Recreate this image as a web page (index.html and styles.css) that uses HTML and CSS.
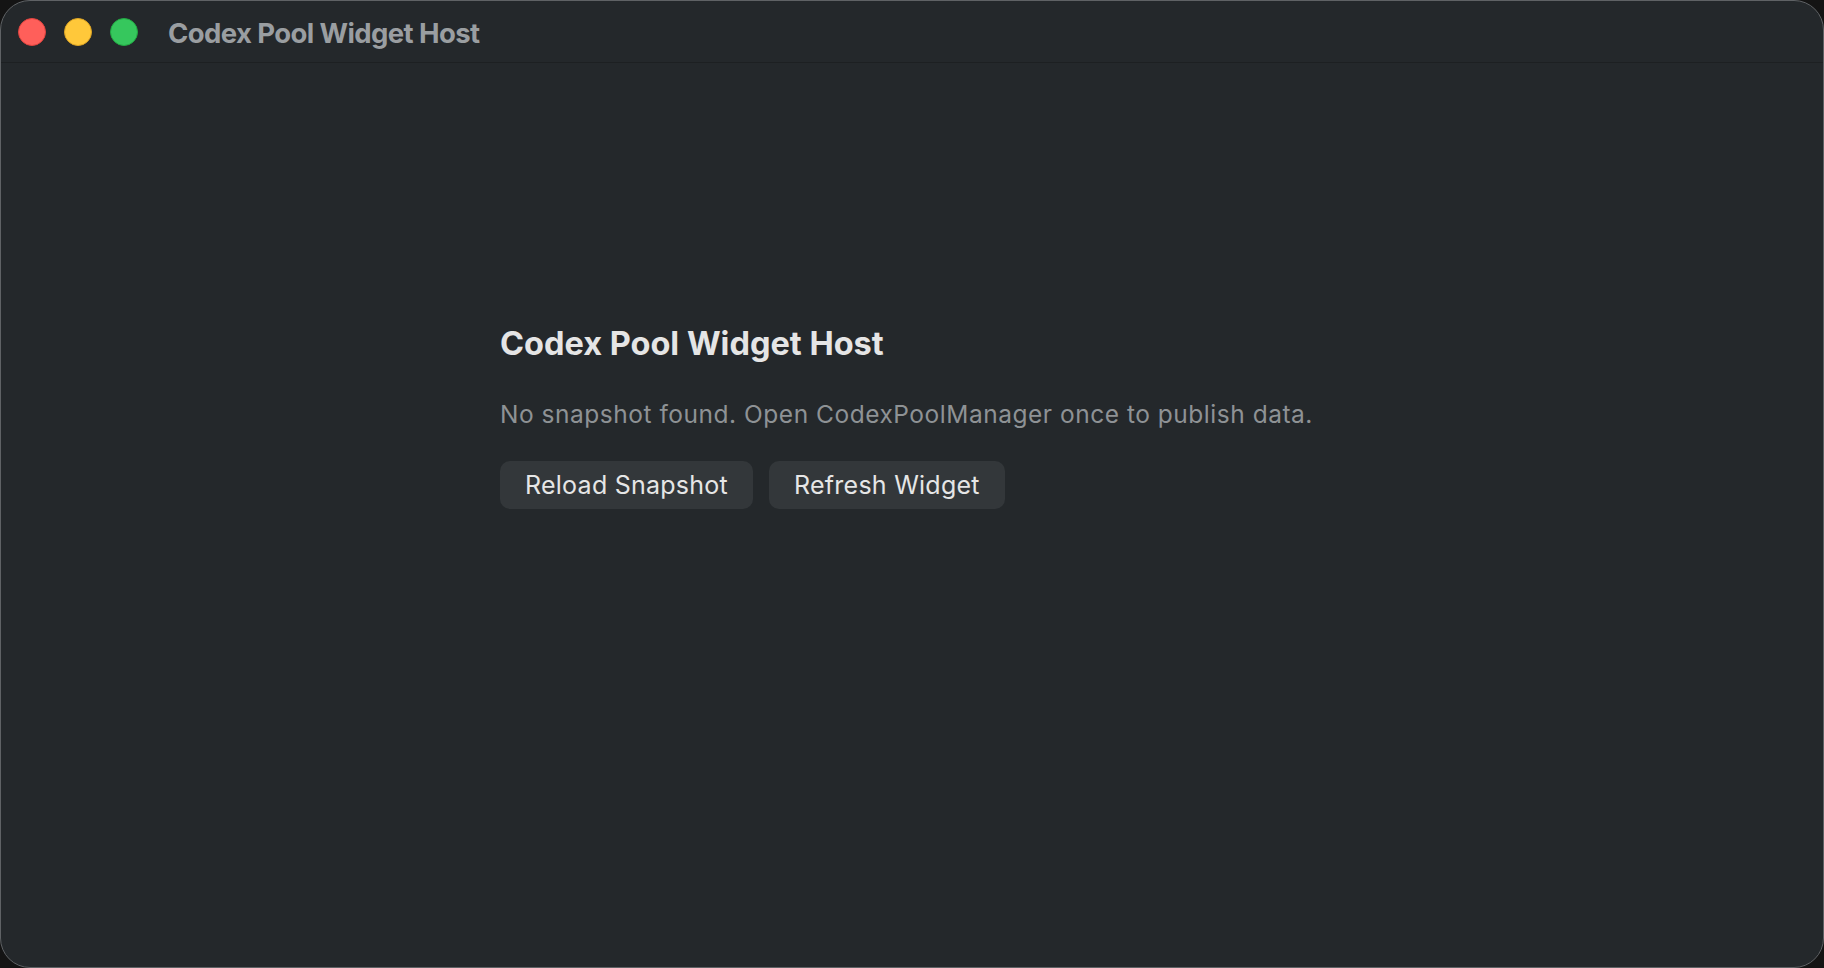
FILE: index.html
```html
<!DOCTYPE html>
<html lang="en">
<head>
  <meta charset="UTF-8">
  <meta name="viewport" content="width=device-width, initial-scale=1.0">
  <title>Codex Pool Widget Host</title>
  <link rel="stylesheet" href="styles.css">
</head>
<body>
  <div class="window">
    <div class="titlebar">
      <div class="lights">
        <span class="light close"></span>
        <span class="light minimize"></span>
        <span class="light zoom"></span>
      </div>
      <div class="window-title">Codex Pool Widget Host</div>
    </div>

    <div class="content">
      <h1>Codex Pool Widget Host</h1>
      <p class="message">No snapshot found. Open CodexPoolManager once to publish data.</p>
      <div class="actions">
        <button class="button">Reload Snapshot</button>
        <button class="button">Refresh Widget</button>
      </div>
    </div>
  </div>
</body>
</html>
```

FILE: styles.css
```css
html, body {
  margin: 0;
  padding: 0;
  height: 100%;
}

body {
  font-family: Inter, 'Noto Sans', 'Liberation Sans', sans-serif;
  background: #141414;
}

.window {
  box-sizing: border-box;
  height: 100%;
  display: flex;
  flex-direction: column;
  background: #24282b;
  border: 1px solid #5f6265;
  border-radius: 30px;
  overflow: hidden;
}

.titlebar {
  height: 61px;
  flex-shrink: 0;
  display: flex;
  align-items: center;
  border-bottom: 1px solid #1d2022;
}

.lights {
  display: flex;
  gap: 18px;
  padding-left: 17px;
}

.light {
  box-sizing: border-box;
  width: 28px;
  height: 28px;
  border-radius: 50%;
  margin-top: 1px;
}

.close {
  background: #ff5f5a;
  border: 1px solid #e0443f;
}

.minimize {
  background: #ffc83a;
  border: 1px solid #dca425;
}

.zoom {
  background: #36c75d;
  border: 1px solid #22a943;
}

.window-title {
  margin-left: 30px;
  font-size: 27.5px;
  font-weight: 700;
  letter-spacing: -0.6px;
  color: #9a9ea1;
  line-height: 34px;
  margin-top: 2px;
}

.content {
  flex: 1;
  padding: 261px 0 0 499px;
}

h1 {
  margin: 0;
  font-size: 32.5px;
  line-height: 40px;
  font-weight: 700;
  color: #e5e5e5;
}

.message {
  margin: 34px 0 0;
  font-size: 24.5px;
  letter-spacing: 0.52px;
  line-height: 32px;
  color: #8e9295;
}

.actions {
  display: flex;
  gap: 16px;
  margin-top: 31px;
}

.button {
  height: 48px;
  padding: 0 25px;
  border: none;
  border-radius: 10px;
  background: #33373a;
  color: #e6e6e6;
  font-family: inherit;
  font-size: 25px;
  letter-spacing: 0.25px;
  line-height: 48px;
  cursor: pointer;
}

.button:hover {
  background: #3a3e41;
}
```
